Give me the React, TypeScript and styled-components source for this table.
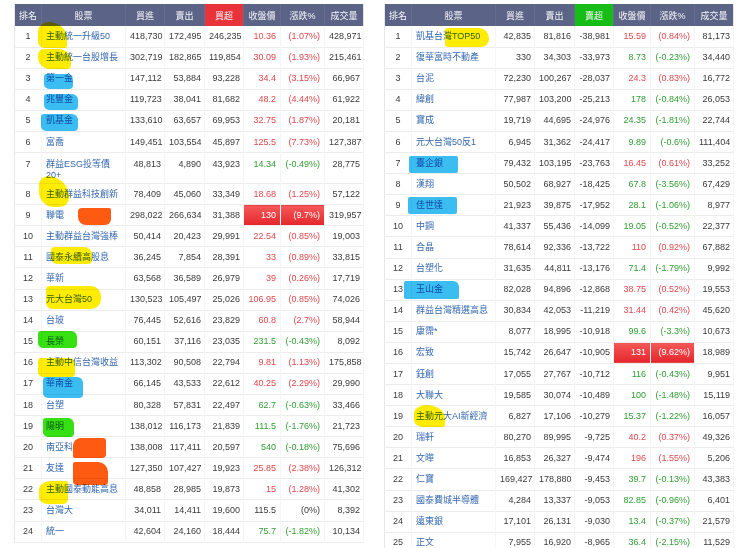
import React from 'react';
import styled, { createGlobalStyle, css } from 'styled-components';

const GlobalStyle = createGlobalStyle`
  html, body {
    margin: 0;
    padding: 0;
    background: #ffffff;
    overflow: hidden;
  }
  body {
    font-family: "Liberation Sans", "Noto Sans CJK TC", sans-serif;
  }
`;

type Tone = 'up' | 'down' | 'flat' | 'limit';

interface MarkSpec {
  color: string;
  x: number;
  y: number;
  w: number;
  h: number;
  r?: string;
}

interface StockRow {
  rank: number;
  name: React.ReactNode;
  buy: string;
  sell: string;
  net: string;
  price: string;
  pct: string;
  vol: string;
  tone: Tone;
  tall?: boolean;
  mark?: MarkSpec;
}

const YELLOW = '#ffec00';
const CYAN = '#3cbdf2';
const GREEN = '#36e012';
const ORANGE = '#ff5a12';

const Page = styled.div`
  display: flex;
  gap: 21px;
  padding: 4px 0 0 14px;
  height: 548px;
  box-sizing: border-box;
`;

const Panel = styled.div`
  width: 349px;
  flex-shrink: 0;
`;

const Table = styled.table`
  width: 349px;
  table-layout: fixed;
  border-collapse: collapse;
  font-size: 9px;
  color: #3a3a3a;
  border-left: 1px solid #e6e6e6;
  border-right: 1px solid #e6e6e6;
`;

const HeadCell = styled.th<{ $accent?: string }>`
  height: 22px;
  padding: 0;
  font-weight: normal;
  text-align: center;
  color: #f4f5f8;
  background: ${(p) => p.$accent ?? '#5b6486'};
  border-right: 1px solid #646d8d;
  &:last-child {
    border-right: none;
  }
`;

const Row = styled.tr<{ $tall?: boolean }>`
  height: ${(p) => (p.$tall ? '31px' : '21.1px')};
  border-bottom: 1px solid #ececec;
`;

const cellBase = css<{ $tall?: boolean }>`
  padding: 0 4px;
  line-height: 11px;
  white-space: nowrap;
  border-right: 1px solid #f5f5f5;
  vertical-align: ${(p) => (p.$tall ? 'top' : 'middle')};
  padding-top: ${(p) => (p.$tall ? '6px' : '0')};
`;

const RankCell = styled.td<{ $tall?: boolean }>`
  ${cellBase};
  text-align: center;
  padding-left: 0;
  padding-right: 0;
`;

const NameCell = styled.td<{ $tall?: boolean }>`
  ${cellBase};
  position: relative;
  color: #3468b0;
  white-space: normal;
`;

const NumCell = styled.td<{ $tall?: boolean }>`
  ${cellBase};
  text-align: right;
  padding-right: 3px;
`;

const toneColor: Record<Tone, string> = {
  up: '#e2474c',
  down: '#2f9f32',
  flat: '#3a3a3a',
  limit: '#ffffff',
};

const QuoteCell = styled.td<{ $tall?: boolean; $tone: Tone }>`
  ${cellBase};
  text-align: right;
  color: ${(p) => toneColor[p.$tone]};
  ${(p) =>
    p.$tone === 'limit' &&
    css`
      background: linear-gradient(#f65a5a, #e4262c);
      border-right: 1px solid #ffffff;
    `}
`;

const Mark = styled.span<{ $m: MarkSpec }>`
  position: absolute;
  z-index: 1;
  left: ${(p) => p.$m.x}px;
  top: ${(p) => p.$m.y}px;
  width: ${(p) => p.$m.w}px;
  height: ${(p) => p.$m.h}px;
  background: ${(p) => p.$m.color};
  border-radius: ${(p) => p.$m.r ?? '3px 6px 4px 5px'};
  mix-blend-mode: multiply;
  pointer-events: none;
`;

const leftRows: StockRow[] = [
  { rank: 1, name: '主動統一升級50', buy: '418,730', sell: '172,495', net: '246,235', price: '10.36', pct: '(1.07%)', vol: '428,971', tone: 'up',
    mark: { color: YELLOW, x: -4, y: -4, w: 29, h: 26, r: '40% 70% 10% 25%' } },
  { rank: 2, name: '主動統一台股增長', buy: '302,719', sell: '182,865', net: '119,854', price: '30.09', pct: '(1.93%)', vol: '215,461', tone: 'up',
    mark: { color: YELLOW, x: -4, y: 1, w: 33, h: 20, r: '6px 12px 4px 12px' } },
  { rank: 3, name: '第一金', buy: '147,112', sell: '53,884', net: '93,228', price: '34.4', pct: '(3.15%)', vol: '66,967', tone: 'up',
    mark: { color: CYAN, x: 2, y: 5, w: 29, h: 15 } },
  { rank: 4, name: '兆豐金', buy: '119,723', sell: '38,041', net: '81,682', price: '48.2', pct: '(4.44%)', vol: '61,922', tone: 'up',
    mark: { color: CYAN, x: 2, y: 4, w: 34, h: 16 } },
  { rank: 5, name: '凱基金', buy: '133,610', sell: '63,657', net: '69,953', price: '32.75', pct: '(1.87%)', vol: '20,181', tone: 'up',
    mark: { color: CYAN, x: -1, y: 3, w: 37, h: 17 } },
  { rank: 6, name: '富喬', buy: '149,451', sell: '103,554', net: '45,897', price: '125.5', pct: '(7.73%)', vol: '127,387', tone: 'up' },
  { rank: 7, name: <>群益ESG投等債<br />20+</>, buy: '48,813', sell: '4,890', net: '43,923', price: '14.34', pct: '(-0.49%)', vol: '28,775', tone: 'down', tall: true },
  { rank: 8, name: '主動群益科技創新', buy: '78,409', sell: '45,060', net: '33,349', price: '18.68', pct: '(1.25%)', vol: '57,122', tone: 'up',
    mark: { color: YELLOW, x: -3, y: -8, w: 30, h: 31, r: '30% 70% 30% 50%' } },
  { rank: 9, name: '聯電', buy: '298,022', sell: '266,634', net: '31,388', price: '130', pct: '(9.7%)', vol: '319,957', tone: 'limit',
    mark: { color: ORANGE, x: 36, y: 3, w: 33, h: 17, r: '4px 2px 6px 8px' } },
  { rank: 10, name: '主動群益台灣強棒', buy: '50,414', sell: '20,423', net: '29,991', price: '22.54', pct: '(0.85%)', vol: '19,003', tone: 'up' },
  { rank: 11, name: '國泰永續高股息', buy: '36,245', sell: '7,854', net: '28,391', price: '33', pct: '(0.89%)', vol: '33,815', tone: 'up',
    mark: { color: YELLOW, x: 9, y: 0, w: 41, h: 17, r: '4px 8px 4px 6px' } },
  { rank: 12, name: '華新', buy: '63,568', sell: '36,589', net: '26,979', price: '39', pct: '(0.26%)', vol: '17,719', tone: 'up' },
  { rank: 13, name: '元大台灣50', buy: '130,523', sell: '105,497', net: '25,026', price: '106.95', pct: '(0.85%)', vol: '74,026', tone: 'up',
    mark: { color: YELLOW, x: 4, y: -4, w: 55, h: 23, r: '4px 10px 10px 6px' } },
  { rank: 14, name: '台玻', buy: '76,445', sell: '52,616', net: '23,829', price: '60.8', pct: '(2.7%)', vol: '58,944', tone: 'up' },
  { rank: 15, name: '長榮', buy: '60,151', sell: '37,116', net: '23,035', price: '231.5', pct: '(-0.43%)', vol: '8,092', tone: 'down',
    mark: { color: GREEN, x: -4, y: -1, w: 39, h: 17 } },
  { rank: 16, name: '主動中信台灣收益', buy: '113,302', sell: '90,508', net: '22,794', price: '9.81', pct: '(1.13%)', vol: '175,858', tone: 'up',
    mark: { color: YELLOW, x: -4, y: 5, w: 37, h: 19 } },
  { rank: 17, name: '華南金', buy: '66,145', sell: '43,533', net: '22,612', price: '40.25', pct: '(2.29%)', vol: '29,990', tone: 'up',
    mark: { color: CYAN, x: 1, y: 3, w: 40, h: 21 } },
  { rank: 18, name: '台塑', buy: '80,328', sell: '57,831', net: '22,497', price: '62.7', pct: '(-0.63%)', vol: '33,466', tone: 'down' },
  { rank: 19, name: '陽明', buy: '138,012', sell: '116,173', net: '21,839', price: '111.5', pct: '(-1.76%)', vol: '21,723', tone: 'down',
    mark: { color: GREEN, x: 1, y: 2, w: 31, h: 19 } },
  { rank: 20, name: '南亞科', buy: '138,008', sell: '117,411', net: '20,597', price: '540', pct: '(-0.18%)', vol: '75,696', tone: 'down',
    mark: { color: ORANGE, x: 31, y: 1, w: 33, h: 20, r: '8px 3px 4px 2px' } },
  { rank: 21, name: '友達', buy: '127,350', sell: '107,427', net: '19,923', price: '25.85', pct: '(2.38%)', vol: '126,312', tone: 'up',
    mark: { color: ORANGE, x: 31, y: 4, w: 35, h: 23, r: '2px 10px 3px 4px' } },
  { rank: 22, name: '主動國泰動能高息', buy: '48,858', sell: '28,985', net: '19,873', price: '15', pct: '(1.28%)', vol: '41,302', tone: 'up',
    mark: { color: YELLOW, x: -3, y: 2, w: 29, h: 23, r: '40% 10% 20% 30%' } },
  { rank: 23, name: '台灣大', buy: '34,011', sell: '14,411', net: '19,600', price: '115.5', pct: '(0%)', vol: '8,392', tone: 'flat' },
  { rank: 24, name: '統一', buy: '42,604', sell: '24,160', net: '18,444', price: '75.7', pct: '(-1.82%)', vol: '10,134', tone: 'down' },
];

const rightRows: StockRow[] = [
  { rank: 1, name: '凱基台灣TOP50', buy: '42,835', sell: '81,816', net: '-38,981', price: '15.59', pct: '(0.84%)', vol: '81,173', tone: 'up',
    mark: { color: YELLOW, x: 33, y: 2, w: 44, h: 19, r: '3px 10px 8px 3px' } },
  { rank: 2, name: '復華富時不動產', buy: '330', sell: '34,303', net: '-33,973', price: '8.73', pct: '(-0.23%)', vol: '34,440', tone: 'down' },
  { rank: 3, name: '台泥', buy: '72,230', sell: '100,267', net: '-28,037', price: '24.3', pct: '(0.83%)', vol: '16,772', tone: 'up' },
  { rank: 4, name: '緯創', buy: '77,987', sell: '103,200', net: '-25,213', price: '178', pct: '(-0.84%)', vol: '26,053', tone: 'down' },
  { rank: 5, name: '寶成', buy: '19,719', sell: '44,695', net: '-24,976', price: '24.35', pct: '(-1.81%)', vol: '22,744', tone: 'down' },
  { rank: 6, name: '元大台灣50反1', buy: '6,945', sell: '31,362', net: '-24,417', price: '9.89', pct: '(-0.6%)', vol: '111,404', tone: 'down' },
  { rank: 7, name: '臺企銀', buy: '79,432', sell: '103,195', net: '-23,763', price: '16.45', pct: '(0.61%)', vol: '33,252', tone: 'up',
    mark: { color: CYAN, x: -3, y: 3, w: 49, h: 17, r: '2px' } },
  { rank: 8, name: '漢翔', buy: '50,502', sell: '68,927', net: '-18,425', price: '67.8', pct: '(-3.56%)', vol: '67,429', tone: 'down' },
  { rank: 9, name: '佳世達', buy: '21,923', sell: '39,875', net: '-17,952', price: '28.1', pct: '(-1.06%)', vol: '8,977', tone: 'down',
    mark: { color: CYAN, x: -4, y: 2, w: 49, h: 17, r: '2px' } },
  { rank: 10, name: '中鋼', buy: '41,337', sell: '55,436', net: '-14,099', price: '19.05', pct: '(-0.52%)', vol: '22,377', tone: 'down' },
  { rank: 11, name: '合晶', buy: '78,614', sell: '92,336', net: '-13,722', price: '110', pct: '(0.92%)', vol: '67,882', tone: 'up' },
  { rank: 12, name: '台塑化', buy: '31,635', sell: '44,811', net: '-13,176', price: '71.4', pct: '(-1.79%)', vol: '9,992', tone: 'down' },
  { rank: 13, name: '玉山金', buy: '82,028', sell: '94,896', net: '-12,868', price: '38.75', pct: '(0.52%)', vol: '19,553', tone: 'up',
    mark: { color: CYAN, x: -8, y: 1, w: 55, h: 18, r: '2px 6px 2px 2px' } },
  { rank: 14, name: '群益台灣精選高息', buy: '30,834', sell: '42,053', net: '-11,219', price: '31.44', pct: '(0.42%)', vol: '45,620', tone: 'up' },
  { rank: 15, name: '康霈*', buy: '8,077', sell: '18,995', net: '-10,918', price: '99.6', pct: '(-3.3%)', vol: '10,673', tone: 'down' },
  { rank: 16, name: '宏致', buy: '15,742', sell: '26,647', net: '-10,905', price: '131', pct: '(9.62%)', vol: '18,989', tone: 'limit' },
  { rank: 17, name: '鈺創', buy: '17,055', sell: '27,767', net: '-10,712', price: '116', pct: '(-0.43%)', vol: '9,951', tone: 'down' },
  { rank: 18, name: '大聯大', buy: '19,585', sell: '30,074', net: '-10,489', price: '100', pct: '(-1.48%)', vol: '15,119', tone: 'down' },
  { rank: 19, name: '主動元大AI新經濟', buy: '6,827', sell: '17,106', net: '-10,279', price: '15.37', pct: '(-1.22%)', vol: '16,057', tone: 'down',
    mark: { color: YELLOW, x: 2, y: -1, w: 31, h: 22, r: '40% 60% 10% 30%' } },
  { rank: 20, name: '瑞軒', buy: '80,270', sell: '89,995', net: '-9,725', price: '40.2', pct: '(0.37%)', vol: '49,326', tone: 'up' },
  { rank: 21, name: '文曄', buy: '16,853', sell: '26,327', net: '-9,474', price: '196', pct: '(1.55%)', vol: '5,206', tone: 'up' },
  { rank: 22, name: '仁寶', buy: '169,427', sell: '178,880', net: '-9,453', price: '39.7', pct: '(-0.13%)', vol: '43,383', tone: 'down' },
  { rank: 23, name: '國泰費城半導體', buy: '4,284', sell: '13,337', net: '-9,053', price: '82.85', pct: '(-0.96%)', vol: '6,401', tone: 'down' },
  { rank: 24, name: '遠東銀', buy: '17,101', sell: '26,131', net: '-9,030', price: '13.4', pct: '(-0.37%)', vol: '21,579', tone: 'down' },
  { rank: 25, name: '正文', buy: '7,955', sell: '16,920', net: '-8,965', price: '36.4', pct: '(-2.15%)', vol: '11,529', tone: 'down' },
];

const widths = [27, 84, 39, 40, 39, 37, 44, 39];

interface RankTableProps {
  netLabel: string;
  netColor: string;
  rows: StockRow[];
}

const RankTable: React.FC<RankTableProps> = ({ netLabel, netColor, rows }) => (
  <Panel>
    <Table>
      <colgroup>
        {widths.map((w, i) => (
          <col key={i} style={{ width: w }} />
        ))}
      </colgroup>
      <thead>
        <tr>
          <HeadCell>排名</HeadCell>
          <HeadCell>股票</HeadCell>
          <HeadCell>買進</HeadCell>
          <HeadCell>賣出</HeadCell>
          <HeadCell $accent={netColor}>{netLabel}</HeadCell>
          <HeadCell>收盤價</HeadCell>
          <HeadCell>漲跌%</HeadCell>
          <HeadCell>成交量</HeadCell>
        </tr>
      </thead>
      <tbody>
        {rows.map((r) => (
          <Row key={r.rank} $tall={r.tall}>
            <RankCell $tall={r.tall}>{r.rank}</RankCell>
            <NameCell $tall={r.tall}>
              {r.name}
              {r.mark && <Mark $m={r.mark} />}
            </NameCell>
            <NumCell $tall={r.tall}>{r.buy}</NumCell>
            <NumCell $tall={r.tall}>{r.sell}</NumCell>
            <NumCell $tall={r.tall}>{r.net}</NumCell>
            <QuoteCell $tall={r.tall} $tone={r.tone}>{r.price}</QuoteCell>
            <QuoteCell $tall={r.tall} $tone={r.tone}>{r.pct}</QuoteCell>
            <NumCell $tall={r.tall}>{r.vol}</NumCell>
          </Row>
        ))}
      </tbody>
    </Table>
  </Panel>
);

export default function App() {
  return (
    <>
      <GlobalStyle />
      <Page>
        <RankTable netLabel="買超" netColor="#e8333b" rows={leftRows} />
        <RankTable netLabel="賣超" netColor="#16bd16" rows={rightRows} />
      </Page>
    </>
  );
}
